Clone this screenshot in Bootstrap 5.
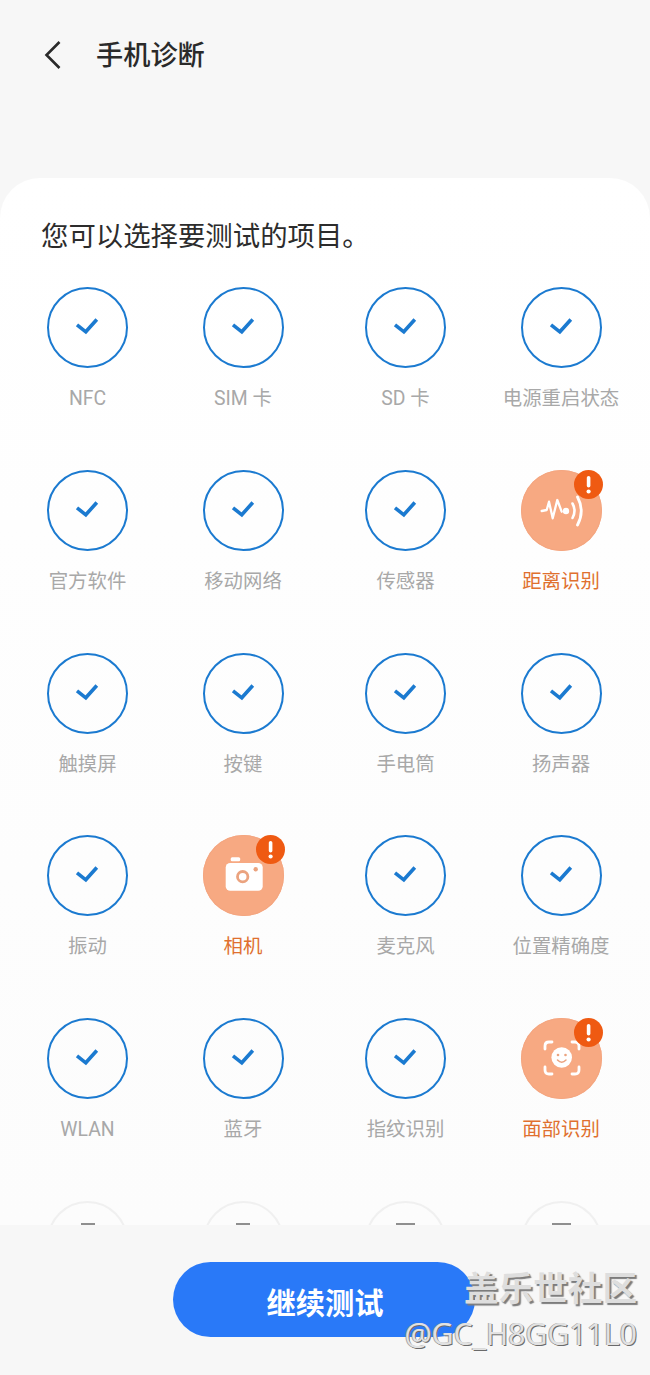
<!DOCTYPE html>
<html lang="zh-CN">
<head>
<meta charset="utf-8">
<title>手机诊断</title>
<link href="https://cdn.jsdelivr.net/npm/bootstrap@5.3.0/dist/css/bootstrap.min.css" rel="stylesheet">
<style>
html,body{margin:0;height:1375px;overflow:hidden}
body{background:#f7f7f7;font-family:"Roboto","Noto Sans CJK SC",sans-serif;color:#252525;width:650px;position:relative}
.top-bar{height:178px;padding:28px 0 0 41px;align-items:flex-start}
.top-bar h1{font-size:27.2px;line-height:56px;font-weight:500;margin:0 0 0 28px;color:#2a2a2a}
.back-ico{width:27px;height:54px}
.sheet{height:1047px;background:linear-gradient(#fff,#fcfcfc);border-radius:40px 40px 0 0;overflow:hidden}
.lead-txt{font-size:27.4px;line-height:38px;margin:0;padding:40px 0 0 41px;height:109px;color:#2c2c2c}
.test-grid{display:grid;grid-template-columns:175px 136px 189px 122px;grid-auto-rows:182.75px}
.ring{width:81px;height:81px;flex:none;position:relative}
.ring svg.main{display:block;width:81px;height:81px}
.ring-check{border:2px solid #1b7ad0;border-radius:50%}
.ring-check svg.main{margin:-2px}
.ring-warn{background:#f7a982;border-radius:50%;box-shadow:inset 0 0 0 1px #f4a680}
.ring-dim{border:2px solid #f0f0f0;border-radius:50%}
.ring-dim span{display:block;height:2px;background:#8f8f8f;margin:20px auto 0}
.dash-s{width:14px}
.dash-l{width:19px}
.alert-dot{position:absolute;top:0;right:-1px;width:29px;height:29px;border-radius:50%;background:#ef5a12;color:#fff}
.alert-dot svg{display:block;width:29px;height:29px}
.item-label{font-size:19.4px;line-height:26px;margin-top:18px;color:#a8a8a8;white-space:nowrap}
.item-warn{color:#e0702f}
.foot-bar{height:150px;background:#f7f7f7;position:relative;padding-top:37px}
.go-btn{display:block;margin-left:173px;width:302px;height:75px;background:#2979f8;border:0;color:#fff;font-size:29.3px;font-weight:700;line-height:75px;padding:5px 0 0 2px}
.go-btn:hover{background:#2979f8;color:#fff}
.mark-a,.mark-b{position:absolute;right:13px;white-space:nowrap;line-height:1}
.mark-a{top:47px;font-size:34.6px;font-weight:700;color:#dedede;text-shadow:2px 2px 1px #7c7c7c}
.mark-b{top:94px;font-size:30.2px;color:#e2e2e2;text-shadow:1px 1px 0 #6a6a6a,-1px 0 0 #a5a5a5;font-family:"Open Sans","Noto Sans CJK SC",sans-serif}
</style>
</head>
<body>
<svg width="0" height="0" class="d-block" style="position:absolute">
<defs>
<symbol id="chk" viewBox="0 0 81 81"><path d="M30 37.8 38.8 44.8 49.8 32.5" fill="none" stroke="#1b7ad0" stroke-width="3.6"/></symbol>
<symbol id="bang" viewBox="0 0 29 29"><rect x="12.8" y="6" width="3.6" height="11.5" rx="1.8" fill="#fff"/><circle cx="14.6" cy="21.5" r="2.1" fill="#fff"/></symbol>
</defs>
</svg>

<header class="top-bar d-flex">
  <svg class="back-ico" viewBox="0 0 27 54" aria-hidden="true"><path d="M18.5 14 5.5 27 18.5 40" fill="none" stroke="#2a2a2a" stroke-width="2.6"/></svg>
  <h1>手机诊断</h1>
</header>

<main class="sheet">
  <p class="lead-txt">您可以选择要测试的项目。</p>
  <div class="test-grid">
    <div class="d-flex flex-column align-items-center"><div class="ring ring-check"><svg class="main"><use href="#chk"/></svg></div><div class="item-label">NFC</div></div>
    <div class="d-flex flex-column align-items-center"><div class="ring ring-check"><svg class="main"><use href="#chk"/></svg></div><div class="item-label">SIM 卡</div></div>
    <div class="d-flex flex-column align-items-center"><div class="ring ring-check"><svg class="main"><use href="#chk"/></svg></div><div class="item-label">SD 卡</div></div>
    <div class="d-flex flex-column align-items-center"><div class="ring ring-check"><svg class="main"><use href="#chk"/></svg></div><div class="item-label">电源重启状态</div></div>

    <div class="d-flex flex-column align-items-center"><div class="ring ring-check"><svg class="main"><use href="#chk"/></svg></div><div class="item-label">官方软件</div></div>
    <div class="d-flex flex-column align-items-center"><div class="ring ring-check"><svg class="main"><use href="#chk"/></svg></div><div class="item-label">移动网络</div></div>
    <div class="d-flex flex-column align-items-center"><div class="ring ring-check"><svg class="main"><use href="#chk"/></svg></div><div class="item-label">传感器</div></div>
    <div class="d-flex flex-column align-items-center"><div class="ring ring-warn">
      <svg class="main" viewBox="0 0 81 81"><g fill="none" stroke="#fff" stroke-width="2.3" stroke-linecap="round" stroke-linejoin="round"><path d="M20.7 41 25.7 40 28 31.7 31.7 48.3 36.3 30 40.7 41.7"/><path d="M51.5 33.5Q55.5 40.7 51.5 48" stroke-width="2.6"/><path d="M56.5 27Q64 41 56.5 55" stroke-width="2.8"/></g><circle cx="45" cy="41" r="3.2" fill="#fff"/></svg>
      <span class="alert-dot"><svg><use href="#bang"/></svg></span></div><div class="item-label item-warn">距离识别</div></div>

    <div class="d-flex flex-column align-items-center"><div class="ring ring-check"><svg class="main"><use href="#chk"/></svg></div><div class="item-label">触摸屏</div></div>
    <div class="d-flex flex-column align-items-center"><div class="ring ring-check"><svg class="main"><use href="#chk"/></svg></div><div class="item-label">按键</div></div>
    <div class="d-flex flex-column align-items-center"><div class="ring ring-check"><svg class="main"><use href="#chk"/></svg></div><div class="item-label">手电筒</div></div>
    <div class="d-flex flex-column align-items-center"><div class="ring ring-check"><svg class="main"><use href="#chk"/></svg></div><div class="item-label">扬声器</div></div>

    <div class="d-flex flex-column align-items-center"><div class="ring ring-check"><svg class="main"><use href="#chk"/></svg></div><div class="item-label">振动</div></div>
    <div class="d-flex flex-column align-items-center"><div class="ring ring-warn">
      <svg class="main" viewBox="0 0 81 81"><rect x="27.7" y="22.3" width="9.5" height="4" rx="1.5" fill="#fff"/><rect x="22.7" y="28" width="37" height="27.7" rx="4.5" fill="#fff"/><circle cx="39.7" cy="41.7" r="5.2" fill="none" stroke="#eba37f" stroke-width="2.8"/><circle cx="52.7" cy="34.3" r="2.2" fill="#eba37f"/></svg>
      <span class="alert-dot"><svg><use href="#bang"/></svg></span></div><div class="item-label item-warn">相机</div></div>
    <div class="d-flex flex-column align-items-center"><div class="ring ring-check"><svg class="main"><use href="#chk"/></svg></div><div class="item-label">麦克风</div></div>
    <div class="d-flex flex-column align-items-center"><div class="ring ring-check"><svg class="main"><use href="#chk"/></svg></div><div class="item-label">位置精确度</div></div>

    <div class="d-flex flex-column align-items-center"><div class="ring ring-check"><svg class="main"><use href="#chk"/></svg></div><div class="item-label">WLAN</div></div>
    <div class="d-flex flex-column align-items-center"><div class="ring ring-check"><svg class="main"><use href="#chk"/></svg></div><div class="item-label">蓝牙</div></div>
    <div class="d-flex flex-column align-items-center"><div class="ring ring-check"><svg class="main"><use href="#chk"/></svg></div><div class="item-label">指纹识别</div></div>
    <div class="d-flex flex-column align-items-center"><div class="ring ring-warn">
      <svg class="main" viewBox="0 0 81 81"><g fill="none" stroke="#fff" stroke-width="2.8" stroke-linecap="round"><path d="M24 31V28Q24 24 28 24H31"/><path d="M51 24H54Q58 24 58 28V31"/><path d="M24 49V52Q24 56 28 56H31"/><path d="M51 56H54Q58 56 58 52V49"/></g><circle cx="40.7" cy="39.5" r="10.3" fill="#fff"/><circle cx="37" cy="37" r="1.3" fill="#eba37f"/><circle cx="44.5" cy="37" r="1.3" fill="#eba37f"/><path d="M36.5 42Q40.7 46.5 45 42" fill="none" stroke="#eba37f" stroke-width="1.5" stroke-linecap="round"/></svg>
      <span class="alert-dot"><svg><use href="#bang"/></svg></span></div><div class="item-label item-warn">面部识别</div></div>

    <div class="d-flex flex-column align-items-center"><div class="ring ring-dim"><span class="dash-s"></span></div></div>
    <div class="d-flex flex-column align-items-center"><div class="ring ring-dim"><span class="dash-s"></span></div></div>
    <div class="d-flex flex-column align-items-center"><div class="ring ring-dim"><span class="dash-l"></span></div></div>
    <div class="d-flex flex-column align-items-center"><div class="ring ring-dim"><span class="dash-l"></span></div></div>
  </div>
</main>

<footer class="foot-bar">
  <button type="button" class="btn go-btn rounded-pill">继续测试</button>
  <div class="mark-a">盖乐世社区</div>
  <div class="mark-b">@GC_H8GG11L0</div>
</footer>
</body>
</html>
